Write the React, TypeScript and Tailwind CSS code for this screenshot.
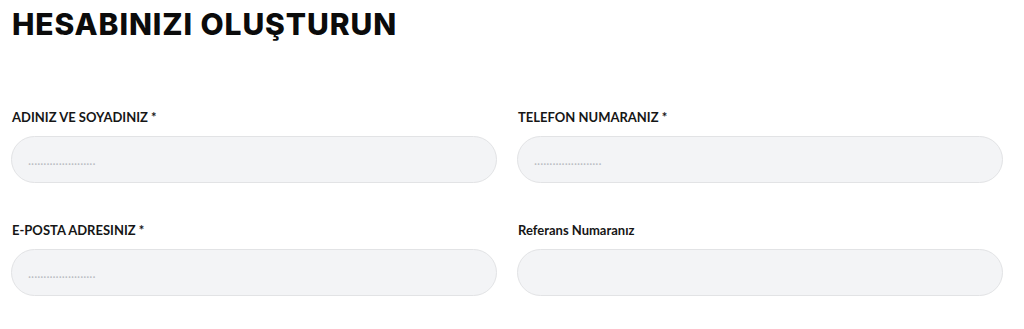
const fields = [
  { label: 'ADINIZ VE SOYADINIZ *', placeholder: '......................' },
  { label: 'TELEFON NUMARANIZ *', placeholder: '......................' },
  { label: 'E-POSTA ADRESINIZ *', placeholder: '......................' },
  { label: 'Referans Numaranız', placeholder: '' },
]

export default function App() {
  return (
    <div className="bg-white w-[1024px] h-[329px] px-[11px] pt-[9px] font-['Lato',sans-serif]">
      <h1 className="text-[30px] leading-[31px] font-extrabold tracking-[0.03em] text-[#0b0b0b] font-['Inter',sans-serif] pl-[1px]">
        HESABINIZI OLUŞTURUN
      </h1>

      {/* Form */}
      <div className="grid grid-cols-2 gap-x-[20px] gap-y-[39px] mt-[69px] w-[992px]">
        {fields.map(f => (
          <div key={f.label}>
            <label className="block text-[13px] leading-[16px] font-bold text-[#161616] pl-[1px] mb-[11px]">
              {f.label}
            </label>
            <input
              className="w-full h-[47px] rounded-full bg-[#f3f4f6] border border-[#e2e3e5] px-[16px] text-[13px] outline-none placeholder:text-[#b9bcc2]"
              placeholder={f.placeholder}
            />
          </div>
        ))}
      </div>
    </div>
  )
}
